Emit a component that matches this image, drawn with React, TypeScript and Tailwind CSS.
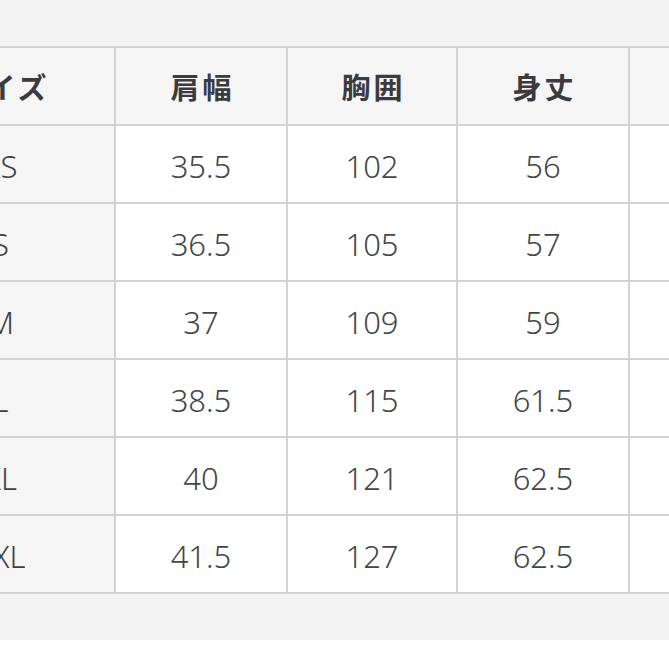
const headers = ['サイズ', '肩幅', '胸囲', '身丈', ''];

const rows = [
  ['XS', '35.5', '102', '56', ''],
  ['S', '36.5', '105', '57', ''],
  ['M', '37', '109', '59', ''],
  ['L', '38.5', '115', '61.5', ''],
  ['XL', '40', '121', '62.5', ''],
  ['XXL', '41.5', '127', '62.5', ''],
];

export default function App() {
  return (
    <div
      className="h-[669px] w-[669px] overflow-hidden bg-white"
      style={{ fontFamily: '"Noto Sans", "Noto Sans CJK JP", sans-serif' }}
    >
      <div className="overflow-hidden bg-[#f4f4f5] pt-[46px] pb-[46px]">
        <div className="ml-[-115px] grid w-max grid-cols-[227px_170px_168px_170px_170px] gap-[2px] bg-[#d2d2d4] p-[2px]">
          {headers.map((h, i) => (
            <div
              key={i}
              className="flex h-[76px] items-center justify-center bg-[#f5f5f6] pt-[4px] pl-[3px] text-[29px] font-bold tracking-[3px] text-[#3b3b3f]"
            >
              {h}
            </div>
          ))}
          {rows.map((r) =>
            r.map((cell, i) => (
              <div
                key={r[0] + i}
                className={
                  i === 0
                    ? 'flex h-[76px] items-center justify-center bg-[#f5f5f6] pt-[4px] text-[31px] font-light text-[#3f3f43]'
                    : 'flex h-[76px] items-center justify-center bg-white pt-[4px] text-[31px] font-light text-[#454548]'
                }
              >
                {cell}
              </div>
            )),
          )}
        </div>
      </div>
    </div>
  );
}
